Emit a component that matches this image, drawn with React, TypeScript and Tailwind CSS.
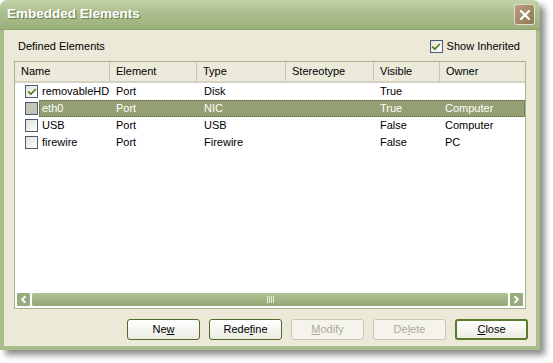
import { Check, X, ChevronLeft, ChevronRight } from 'lucide-react';

type Row = { name: string; element: string; type: string; stereotype: string; visible: string; owner: string; checked: boolean };

const rows: Row[] = [
  { name: 'removableHD', element: 'Port', type: 'Disk', stereotype: '', visible: 'True', owner: '', checked: true },
  { name: 'eth0', element: 'Port', type: 'NIC', stereotype: '', visible: 'True', owner: 'Computer', checked: false },
  { name: 'USB', element: 'Port', type: 'USB', stereotype: '', visible: 'False', owner: 'Computer', checked: false },
  { name: 'firewire', element: 'Port', type: 'Firewire', stereotype: '', visible: 'False', owner: 'PC', checked: false },
];

const cols = 'grid grid-cols-[95px_87px_89px_88px_66px_1fr]';

function Btn({ label, disabled, primary }: { label: [string, string, string]; disabled?: boolean; primary?: boolean }) {
  return (
    <button
      className={`w-[73px] h-[21px] rounded-[3px] text-[11px] leading-none flex items-center justify-center ${
        disabled
          ? 'border border-[#c9c7ba] bg-[#f5f4ec] text-[#aca899]'
          : primary
          ? 'border-2 border-[#5b7a2e] bg-gradient-to-b from-white to-[#ecebe2] text-black'
          : 'border border-[#4f6b28] bg-gradient-to-b from-white to-[#ecebe2] text-black'
      }`}
    >
      {label[0]}
      <span className="underline">{label[1]}</span>
      {label[2]}
    </button>
  );
}

function Box({ checked, dim }: { checked: boolean; dim?: boolean }) {
  return (
    <div className={`w-[13px] h-[13px] border border-[#4b5a78] flex items-center justify-center ${dim ? 'bg-[#c3c5b4]' : 'bg-gradient-to-br from-[#e2e1d8] to-white'}`}>
      {checked && <Check className="w-[10px] h-[10px] text-[#4f7a1a]" strokeWidth={4} />}
    </div>
  );
}

export default function App() {
  return (
    <div className="w-[553px] h-[363px] bg-white font-['Liberation_Sans',Arial,sans-serif] text-[11px] text-black">
      <div className="w-[540px] h-[350px] flex flex-col rounded-t-[7px] shadow-[5px_5px_6px_rgba(0,0,0,0.45)] overflow-hidden">
        {/* Title bar */}
        <div className="h-[30px] flex items-center justify-between pl-[7px] pr-[5px] bg-gradient-to-b from-[#c3d2a8] via-[#a9bd8b] to-[#9bb07c] border-b border-[#8ea26e]">
          <span className="text-white font-bold text-[13.5px] [text-shadow:1px_1px_0_#6c7f4e]">Embedded Elements</span>
          <div className="w-[21px] h-[21px] rounded-[3px] border border-white/70 bg-gradient-to-br from-[#c09b7e] to-[#8a7a52] flex items-center justify-center">
            <X className="w-[16px] h-[16px] text-white" strokeWidth={3.5} />
          </div>
        </div>

        {/* Body */}
        <div className="flex-1 flex flex-col bg-[#ece9d8] border-x-4 border-b-4 border-[#a9bd8b] px-[10px]">
          <div className="h-[31px] flex items-center justify-between pl-[4px] pr-[6px] pt-[2px]">
            <span>Defined Elements</span>
            <div className="flex items-center gap-[4px]">
              <Box checked />
              <span>Show Inherited</span>
            </div>
          </div>

          {/* List */}
          <div className="h-[248px] border border-[#a3b58c] bg-white flex flex-col">
            <div className={`${cols} h-[21px] bg-[#ebeadb] border-b-2 border-[#d6d2c2] text-black`}>
              {['Name', 'Element', 'Type', 'Stereotype', 'Visible', 'Owner'].map((h, i) => (
                <div key={h} className={`flex items-center pl-[6px] ${i < 5 ? 'border-r border-[#c7c5b2]' : ''}`}>{h}</div>
              ))}
            </div>
            {rows.map((r, i) => {
              const sel = i === 1;
              return (
                <div key={r.name} className="h-[17px] flex items-stretch">
                  <div className="w-[24px] flex items-center justify-end pr-[1px]">
                    <Box checked={r.checked} dim={sel} />
                  </div>
                  <div className={`flex-1 grid grid-cols-[71px_87px_89px_88px_66px_1fr] ${sel ? 'bg-[#949f73] text-white outline outline-1 outline-dotted outline-[#54603a] -outline-offset-1' : ''}`}>
                    <div className="flex items-center pl-[3px]">{r.name}</div>
                    <div className="flex items-center pl-[6px]">{r.element}</div>
                    <div className="flex items-center pl-[7px]">{r.type}</div>
                    <div className="flex items-center pl-[6px]">{r.stereotype}</div>
                    <div className="flex items-center pl-[6px]">{r.visible}</div>
                    <div className="flex items-center pl-[5px]">{r.owner}</div>
                  </div>
                </div>
              );
            })}
            <div className="flex-1" />
            {/* Horizontal scrollbar */}
            <div className="h-[16px] flex items-center gap-[1px] px-[1px] mb-[1px]">
              <div className="w-[15px] h-[15px] rounded-[2px] border border-white bg-[#98ab7c] flex items-center justify-center">
                <ChevronLeft className="w-[11px] h-[11px] text-white" strokeWidth={4} />
              </div>
              <div className="flex-1 h-[15px] rounded-[2px] border-y border-white bg-gradient-to-b from-[#b2c294] to-[#93a875] flex items-center justify-center">
                <div className="flex gap-[1px]">
                  {[0, 1, 2, 3].map((k) => (
                    <div key={k} className="w-[1px] h-[7px] bg-[#e8f0d8]" />
                  ))}
                </div>
              </div>
              <div className="w-[15px] h-[15px] rounded-[2px] border border-white bg-[#98ab7c] flex items-center justify-center">
                <ChevronRight className="w-[11px] h-[11px] text-white" strokeWidth={4} />
              </div>
            </div>
          </div>

          {/* Buttons */}
          <div className="flex justify-end gap-[9px] mt-[10px] -mr-[2px]">
            <Btn label={['Ne', 'w', '']} />
            <Btn label={['Rede', 'f', 'ine']} />
            <Btn label={['', 'M', 'odify']} disabled />
            <Btn label={['De', 'l', 'ete']} disabled />
            <Btn label={['', 'C', 'lose']} primary />
          </div>
        </div>
      </div>
    </div>
  );
}
